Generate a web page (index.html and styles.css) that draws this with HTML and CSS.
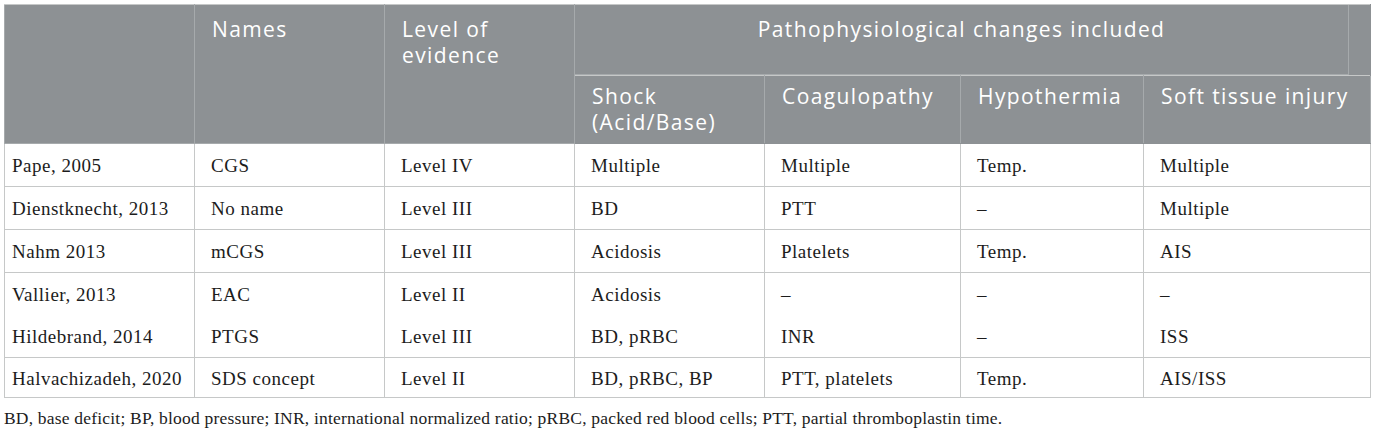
FILE: index.html
```html
<!DOCTYPE html>
<html lang="en">
<head>
  <meta charset="UTF-8">
  <title>Scores table</title>
  <link rel="stylesheet" href="styles.css">
</head>
<body>
  <div class="wrap">
    <table class="scores">
      <colgroup>
        <col class="c-author">
        <col class="c-name">
        <col class="c-level">
        <col class="c-shock">
        <col class="c-coag">
        <col class="c-hypo">
        <col class="c-soft">
      </colgroup>
      <thead>
        <tr class="head-top">
          <th rowspan="2"></th>
          <th rowspan="2">Names</th>
          <th rowspan="2">Level of<br>evidence</th>
          <th colspan="4" class="group"><div class="group-label">Pathophysiological changes included</div></th>
        </tr>
        <tr class="head-sub">
          <th>Shock<br>(Acid/Base)</th>
          <th>Coagulopathy</th>
          <th>Hypothermia</th>
          <th>Soft tissue injury</th>
        </tr>
      </thead>
      <tbody>
        <tr>
          <td>Pape, 2005</td><td>CGS</td><td>Level IV</td><td>Multiple</td><td>Multiple</td><td>Temp.</td><td>Multiple</td>
        </tr>
        <tr>
          <td>Dienstknecht, 2013</td><td>No name</td><td>Level III</td><td>BD</td><td>PTT</td><td>–</td><td>Multiple</td>
        </tr>
        <tr>
          <td>Nahm 2013</td><td>mCGS</td><td>Level III</td><td>Acidosis</td><td>Platelets</td><td>Temp.</td><td>AIS</td>
        </tr>
        <tr class="no-line">
          <td>Vallier, 2013</td><td>EAC</td><td>Level II</td><td>Acidosis</td><td>–</td><td>–</td><td>–</td>
        </tr>
        <tr>
          <td>Hildebrand, 2014</td><td>PTGS</td><td>Level III</td><td>BD, pRBC</td><td>INR</td><td>–</td><td>ISS</td>
        </tr>
        <tr class="last">
          <td>Halvachizadeh, 2020</td><td>SDS concept</td><td>Level II</td><td>BD, pRBC, BP</td><td>PTT, platelets</td><td>Temp.</td><td>AIS/ISS</td>
        </tr>
      </tbody>
    </table>
    <p class="note">BD, base deficit; BP, blood pressure; INR, international normalized ratio; pRBC, packed red blood cells; PTT, partial thromboplastin time.</p>
  </div>
</body>
</html>
```

FILE: styles.css
```css
body {
  margin: 0;
  background-color: #fff;
  color: #1c1c1c;
  font-family: "Liberation Serif", serif;
}
.wrap {
  padding: 4px 5px 0 4px;
}
.scores {
  width: 1366px;
  table-layout: fixed;
  border-collapse: collapse;
  border: 1px solid #c6c8c8;
}
.c-author { width: 190px; }
.c-name { width: 190px; }
.c-level { width: 190px; }
.c-shock { width: 190px; }
.c-coag { width: 196px; }
.c-hypo { width: 183px; }
.c-soft { width: 227px; }

/* cabecera gris */
.scores th {
  background-color: #8d9194;
  color: #fff;
  font-family: "Open Sans", sans-serif;
  font-weight: 400;
  font-size: 21px;
  letter-spacing: 1.4px;
  line-height: 26px;
  text-align: left;
  vertical-align: top;
  border: 1px solid #a6aaac;
  border-top-color: #c6c8c8;
  padding: 11px 6px 0 17px;
  white-space: nowrap;
}
.head-top th {
  height: 59px;
}
.head-sub th {
  height: 60px;
  padding-top: 7px;
  border-bottom-color: #8d9194;
}
.scores th.group {
  height: 70px;
  padding: 0;
  border-right-color: #8d9194;
  border-bottom: none;
}
.group-label {
  box-sizing: border-box;
  margin-right: 21px;
  height: 70px;
  padding-top: 11px;
  text-align: center;
  border-right: 1px solid #a6aaac;
  border-bottom: 1px solid #a6aaac;
}

/* filas */
.scores td {
  font-size: 19px;
  letter-spacing: 0.5px;
  height: 40px;
  padding: 2px 6px 0 16px;
  border: 1px solid #c6c8c8;
  vertical-align: middle;
  white-space: nowrap;
}
.scores td:first-child {
  padding-left: 7px;
}
/* Vallier y Hildebrand comparten bloque, sin línea entre ellos */
.no-line td {
  border-bottom-style: hidden;
}
.last td {
  height: 37px;
}
.note {
  margin: 10px 0 0;
  font-size: 17.5px;
  letter-spacing: 0.2px;
}
```
